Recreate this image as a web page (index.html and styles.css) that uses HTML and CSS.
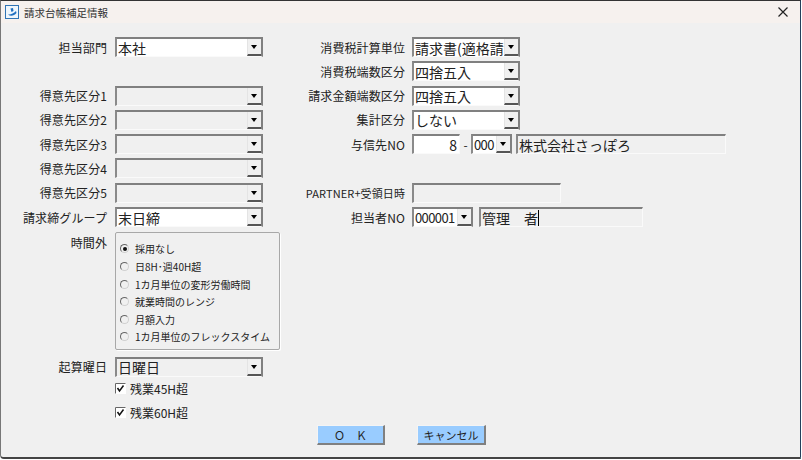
FILE: index.html
```html
<!DOCTYPE html>
<html lang="ja">
<head>
    <meta charset="UTF-8">
    <meta name="viewport" content="width=device-width, initial-scale=1.0">
    <title>請求台帳補足情報</title>
    <link rel="stylesheet" href="styles.css">
</head>
<body>
    <div class="window">
        <div class="titlebar">
            <svg class="app-icon" width="14" height="14" viewBox="0 0 14 14">
                <rect x="0.5" y="0.5" width="13" height="13" fill="#eef6fc" stroke="#2f74b5"/>
                <path d="M3 9.5C5.5 10 8.5 8.5 11 6L11.5 8C9 11 5.5 11.5 3 9.5Z" fill="#1f6fc0"/>
                <path d="M5.5 3.5L8 3L8.5 6L6.5 7Z" fill="#1f6fc0"/>
            </svg>
            <span class="title">請求台帳補足情報</span>
            <svg class="close" width="10" height="10" viewBox="0 0 10 10">
                <path d="M0.5 0.5L9.5 9.5M9.5 0.5L0.5 9.5" stroke="#222" stroke-width="1.2" fill="none"/>
            </svg>
        </div>

        <div class="content">
            <div class="form">
                <div class="col col-left">
                    <div class="row">
                        <label>担当部門</label>
                        <div class="combo w148 on"><span class="val">本社</span><span class="arrow"></span></div>
                    </div>
                    <div class="row"></div>
                    <div class="row">
                        <label>得意先区分1</label>
                        <div class="combo w148"><span class="val"></span><span class="arrow"></span></div>
                    </div>
                    <div class="row">
                        <label>得意先区分2</label>
                        <div class="combo w148"><span class="val"></span><span class="arrow"></span></div>
                    </div>
                    <div class="row">
                        <label>得意先区分3</label>
                        <div class="combo w148"><span class="val"></span><span class="arrow"></span></div>
                    </div>
                    <div class="row">
                        <label>得意先区分4</label>
                        <div class="combo w148"><span class="val"></span><span class="arrow"></span></div>
                    </div>
                    <div class="row">
                        <label>得意先区分5</label>
                        <div class="combo w148"><span class="val"></span><span class="arrow"></span></div>
                    </div>
                    <div class="row">
                        <label>請求締グループ</label>
                        <div class="combo w148 on"><span class="val">末日締</span><span class="arrow"></span></div>
                    </div>
                    <div class="row row-group">
                        <label>時間外</label>
                        <div class="group">
                            <div class="opt"><span class="radio checked"></span>採用なし</div>
                            <div class="opt"><span class="radio"></span>日8H･週40H超</div>
                            <div class="opt"><span class="radio"></span>1カ月単位の変形労働時間</div>
                            <div class="opt"><span class="radio"></span>就業時間のレンジ</div>
                            <div class="opt"><span class="radio"></span>月額入力</div>
                            <div class="opt"><span class="radio"></span>1カ月単位のフレックスタイム</div>
                        </div>
                    </div>
                    <div class="row row-week">
                        <label>起算曜日</label>
                        <div class="combo w148"><span class="val">日曜日</span><span class="arrow"></span></div>
                    </div>
                    <div class="check first">
                        <svg class="box" width="11" height="11" viewBox="0 0 11 11">
                            <path d="M0.5 10.5V0.5H10.5" stroke="#666" fill="none"/>
                            <path d="M2.5 5L4.5 8L8.5 2.5" stroke="#111" stroke-width="1.5" fill="none"/>
                        </svg>
                        残業45H超
                    </div>
                    <div class="check">
                        <svg class="box" width="11" height="11" viewBox="0 0 11 11">
                            <path d="M0.5 10.5V0.5H10.5" stroke="#666" fill="none"/>
                            <path d="M2.5 5L4.5 8L8.5 2.5" stroke="#111" stroke-width="1.5" fill="none"/>
                        </svg>
                        残業60H超
                    </div>
                </div>

                <div class="col col-right">
                    <div class="row">
                        <label>消費税計算単位</label>
                        <div class="combo w108 on"><span class="val">請求書(適格請</span><span class="arrow"></span></div>
                    </div>
                    <div class="row">
                        <label>消費税端数区分</label>
                        <div class="combo w108 on"><span class="val">四捨五入</span><span class="arrow"></span></div>
                    </div>
                    <div class="row">
                        <label>請求金額端数区分</label>
                        <div class="combo w108 on"><span class="val">四捨五入</span><span class="arrow"></span></div>
                    </div>
                    <div class="row">
                        <label>集計区分</label>
                        <div class="combo w108 on"><span class="val">しない</span><span class="arrow"></span></div>
                    </div>
                    <div class="row">
                        <label>与信先NO</label>
                        <div class="field on num">8</div>
                        <span class="dash">-</span>
                        <div class="combo w41 on"><span class="val digits">000</span><span class="arrow"></span></div>
                        <div class="field w210">株式会社さっぽろ</div>
                    </div>
                    <div class="row"></div>
                    <div class="row">
                        <label class="small">PARTNER+受領日時</label>
                        <div class="field w149"></div>
                    </div>
                    <div class="row">
                        <label>担当者NO</label>
                        <div class="combo w61 on"><span class="val digits">000001</span><span class="arrow"></span></div>
                        <div class="field w164"><span class="caret">管理　者</span></div>
                    </div>
                </div>
            </div>

            <div class="actions">
                <button class="btn btn-ok">Ｏ　Ｋ</button>
                <button class="btn btn-cancel">キャンセル</button>
            </div>
        </div>
    </div>
</body>
</html>
```

FILE: styles.css
```css
* {
    box-sizing: border-box;
}
html, body {
    margin: 0;
    padding: 0;
}
body {
    width: 802px;
    height: 460px;
    overflow: hidden;
    background: #fff;
    font-family: "Noto Sans CJK JP", "Liberation Sans", sans-serif;
    color: #222;
}
.window {
    width: 801px;
    height: 459px;
    background: #f0f0f0;
    border-top: 1px solid #333;
    border-left: 1px solid #777;
    border-right: 1px solid #23405c;
    border-bottom: 2px solid #444;
    border-bottom-left-radius: 4px;
    display: flex;
    flex-direction: column;
}
.titlebar {
    height: 22px;
    background: #f6f1ee;
    display: flex;
    align-items: center;
    padding: 0 9px 0 4px;
    flex-shrink: 0;
}
.app-icon {
    margin-right: 5px;
}
.title {
    font-size: 10.5px;
    color: #333;
}
.close {
    margin-left: auto;
    margin-right: 3px;
}
.content {
    flex: 1;
    padding-top: 14px;
}
.form {
    display: flex;
}
.col {
    display: flex;
    flex-direction: column;
    gap: 4.3px;
}
.col-left {
    width: 289px;
}
.row {
    display: flex;
    align-items: center;
    height: 20px;
    flex-shrink: 0;
}
label {
    width: 106px;
    margin-right: 8px;
    text-align: right;
    font-size: 12px;
    color: #222;
    white-space: nowrap;
    letter-spacing: 0.1px;
}
.col-right label {
    width: 115px;
    margin-right: 7px;
}
label.small {
    font-size: 11px;
}
.combo, .field {
    height: 20px;
    display: flex;
    align-items: center;
    font-size: 14px;
    line-height: 16px;
    color: #222;
    background: #f0f0f0;
    border-top: 2px solid #808080;
    border-left: 2px solid #8a8a8a;
    border-right: 1px solid #fafafa;
    border-bottom: 1px solid #fafafa;
    white-space: nowrap;
}
.combo {
    border-right: 2px solid #808080;
}
.on {
    background: #fff;
}
.val {
    flex: 1;
    min-width: 0;
    padding-left: 1px;
}
.digits {
    font-size: 13px;
    letter-spacing: -0.6px;
}
.arrow {
    position: relative;
    width: 14px;
    height: 100%;
    background: #f0f0f0;
    border-bottom: 2px solid #555;
    border-left: 1px solid #e4e4e4;
    flex-shrink: 0;
}
.arrow::after {
    content: "";
    position: absolute;
    left: 3px;
    top: 6px;
    border-left: 3.5px solid transparent;
    border-right: 3.5px solid transparent;
    border-top: 4px solid #000;
}
.w148 { width: 148px; }
.w108 { width: 108px; }
.w41 { width: 41px; }
.w61 { width: 61px; }
.w149 { width: 149px; }
.w210 { width: 210px; margin-left: 4px; }
.w164 { width: 164px; margin-left: 6px; }
.field.num {
    width: 48px;
    justify-content: flex-end;
    padding-right: 2px;
}
.dash {
    width: 11px;
    text-align: center;
    font-size: 12px;
}
.field {
    padding-left: 1px;
}
.caret {
    border-right: 1px solid #000;
}
.row-group {
    height: 118px;
    margin-top: 0.7px;
    align-items: flex-start;
}
.row-group label {
    margin-top: 2px;
}
.group {
    width: 165px;
    height: 118px;
    padding: 7px 0 0 4px;
    border: 1px solid #a8a8a8;
    border-radius: 2px;
    box-shadow: 1px 1px 0 #fff;
}
.opt {
    display: flex;
    align-items: center;
    height: 17.6px;
    font-size: 10px;
    color: #222;
    white-space: nowrap;
}
.radio {
    position: relative;
    width: 9px;
    height: 9px;
    margin-right: 6px;
    border-radius: 50%;
    border: 1px solid #d0d0d0;
    border-top-color: #666;
    border-left-color: #666;
    flex-shrink: 0;
}
.radio.checked::after {
    content: "";
    position: absolute;
    left: 1.5px;
    top: 1.5px;
    width: 4px;
    height: 4px;
    border-radius: 50%;
    background: #111;
}
.row-week {
    margin-top: 2.5px;
}
.check {
    display: flex;
    align-items: center;
    height: 18px;
    margin-left: 114px;
    margin-top: 2px;
    font-size: 12px;
    color: #222;
}
.check.first {
    margin-top: -2px;
}
.box {
    background: #fff;
    margin-right: 4px;
    flex-shrink: 0;
}
.actions {
    display: flex;
    margin-top: 4px;
    padding-left: 316px;
}
.btn {
    height: 20px;
    padding: 0;
    background: #99ccff;
    font-family: "Noto Sans CJK JP", "Liberation Sans", sans-serif;
    font-size: 11px;
    color: #222;
    border-top: 1px solid #f4f4f4;
    border-left: 1px solid #f4f4f4;
    border-right: 2px solid #808080;
    border-bottom: 2px solid #808080;
}
.btn-ok {
    width: 68px;
}
.btn-cancel {
    width: 69px;
    margin-left: 32px;
}
```
